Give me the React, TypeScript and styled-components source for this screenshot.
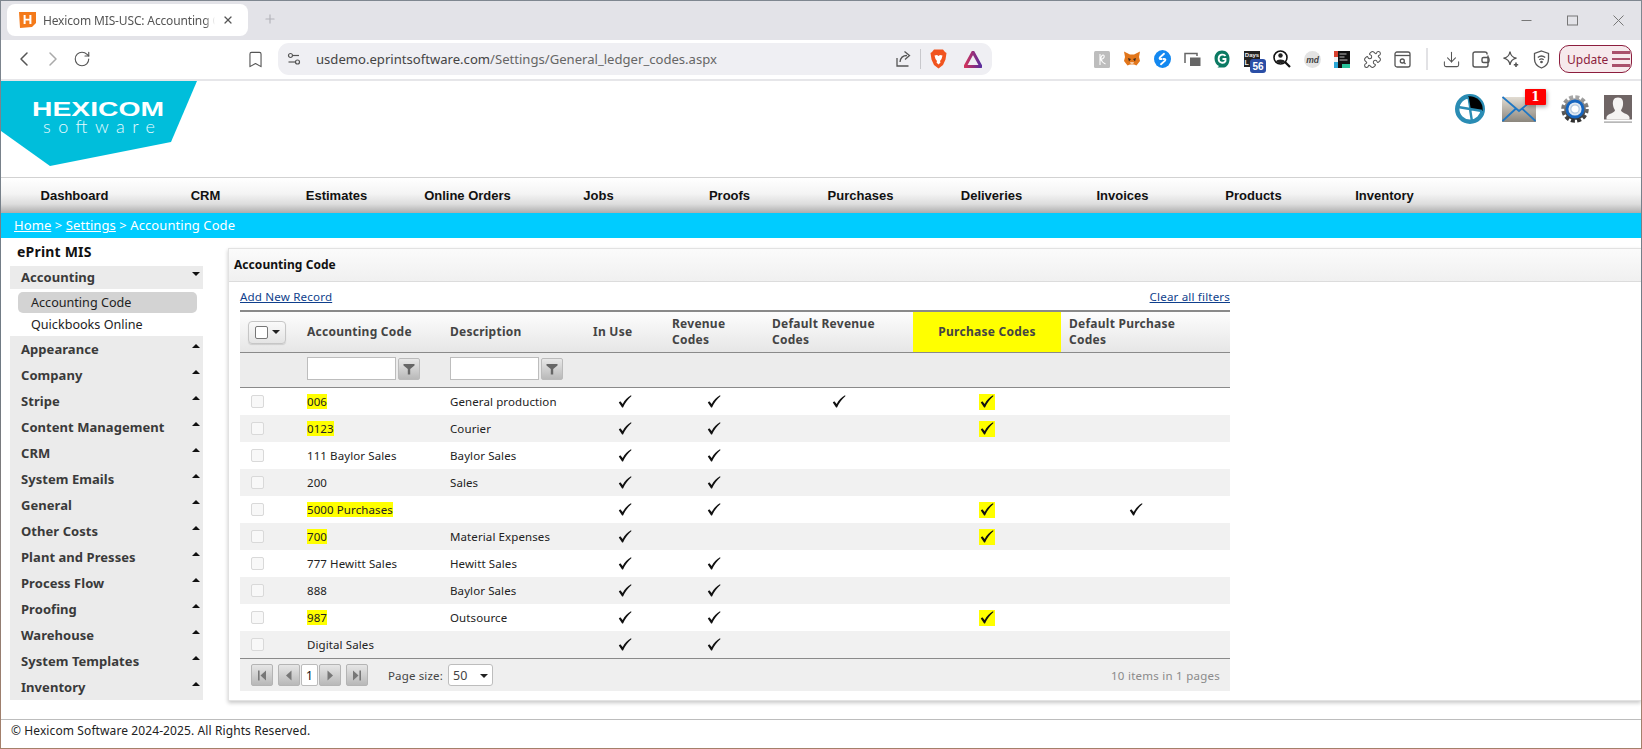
import React from "react";
import styled, { createGlobalStyle } from "styled-components";
import { ChevronLeft, ChevronRight, RotateCw, Bookmark, Puzzle, Download, X, Plus } from "lucide-react";

const UI = `"Noto Sans", "Open Sans", sans-serif`;
const CHROME = `"Noto Sans", "Open Sans", sans-serif`;

const Global = createGlobalStyle`
  html, body { margin: 0; padding: 0; background: #fff; overflow: hidden; }
  * { box-sizing: border-box; }
`;

const Frame = styled.div`
  width: 1642px; height: 749px; display: flex; flex-direction: column; overflow: hidden;
  border: 1px solid; border-image: linear-gradient(#7f8790, #6f7a84 50%, #a5806a) 1;
  font-family: ${UI}; background: #fff; color: #222;
`;

const TabStrip = styled.div`
  height: 39px; flex: none; background: #e3e3e8; display: flex; align-items: flex-start; padding: 3px 0 0 6px;
`;
const Tab = styled.div`
  width: 241px; height: 32px; background: #fff; border-radius: 8px; display: flex; align-items: center; padding-left: 12px;
  font: 12px ${CHROME}; color: #555; letter-spacing: -0.15px;
`;
const TabTitle = styled.span`
  width: 172px; margin-left: 7px; white-space: nowrap;
  -webkit-mask-image: linear-gradient(90deg, #000 94%, transparent);
  mask-image: linear-gradient(90deg, #000 94%, transparent);
`;
const TabClose = styled.span`
  display: flex; margin-left: 7px; color: #555;
`;
const NewTab = styled.span`
  display: flex; margin: 8px 0 0 15px; color: #b4b4ba;
`;
const WindowControls = styled.div`
  margin-left: auto; display: flex; align-items: center; height: 33px; padding-right: 17px; gap: 35px;
`;

const Toolbar = styled.div`
  height: 41px; flex: none; background: #fff; border-bottom: 2px solid #e6e6e9; display: flex; align-items: center; padding: 0 0 1px 8px;
`;
const Slot = styled.span<{ $w?: number; $color?: string }>`
  width: ${(p) => p.$w ?? 30}px; height: 28px; flex: none; display: flex; align-items: center; justify-content: center; position: relative;
  color: ${(p) => p.$color ?? "#555"};
`;
const NavSlots = styled.div`
  display: flex; width: 232px;
`;
const Omnibox = styled.div`
  width: 714px; height: 32px; margin-left: 9px; background: #efeff3; border-radius: 11px; display: flex; align-items: center; padding-left: 8px;
  font: 13.1px ${CHROME}; color: #444;
`;
const UrlText = styled.span`
  margin-left: 14px; white-space: nowrap;
  & > b { font-weight: 400; color: #666; }
`;
const OmniEnd = styled.div`
  margin-left: auto; display: flex; align-items: center; padding-right: 2px;
`;
const Divider = styled.span`
  width: 1px; height: 20px; background: #c8c8cc; margin-left: 8px;
`;
const Extensions = styled.div`
  display: flex; margin-left: 95px;
`;
const ToolSep = styled.span`
  width: 2px; height: 22px; background: #e2e2e5; margin: 0 8px 0 9px; flex: none;
`;
const UpdateButton = styled.div`
  width: 73px; height: 28px; margin-left: 3px; flex: none; border: 1.5px solid #8c1d3d; border-radius: 10px; background: #f6e9ec; color: #8c1d3d;
  font: 12px ${CHROME}; display: flex; align-items: center; padding-left: 7px; gap: 4px;
`;
const Burger = styled.span`
  display: flex; flex-direction: column; gap: 4px; width: 18px;
  & > i { display: block; height: 2.5px; background: #a9506b; }
`;
const DayBadge = styled.span`
  position: absolute; right: 1px; bottom: 0; width: 16px; height: 14px; background: #2a4ea6; color: #fff; border-radius: 3px;
  font: bold 10px "Liberation Sans", sans-serif; display: flex; align-items: center; justify-content: center;
`;

const Header = styled.div`
  height: 96px; flex: none; display: flex; justify-content: space-between; align-items: flex-start; background: #fff;
`;
const HeaderIcons = styled.div`
  display: flex; align-items: center; height: 30px; margin: 13px 9px 0 0;
`;
const IconBox = styled.span<{ $ml?: number }>`
  display: flex; position: relative; margin-left: ${(p) => p.$ml ?? 0}px;
`;
const MailBadge = styled.span`
  position: absolute; left: 23px; top: -7px; width: 21px; height: 16px; background: #f00; color: #fff; border-radius: 1px;
  font: bold 12px "DejaVu Serif", serif; display: flex; align-items: center; justify-content: center; box-shadow: 1px 2px 4px rgba(0,0,0,.35);
`;

const NavBar = styled.nav`
  height: 36px; flex: none; display: flex; padding-left: 8px; align-items: center; border-top: 1px solid #d2d2d2;
  background: linear-gradient(#fff 0%, #f4f4f4 45%, #dcdcdc 75%, #adadad 100%);
`;
const NavItem = styled.a`
  width: 131px; flex: none; text-align: center; font: bold 13px "Liberation Sans", sans-serif; color: #111;
`;

const Crumbs = styled.div`
  height: 25px; flex: none; background: #00ccff; color: #fff; padding: 0 0 1px 13px; display: flex; align-items: center; font-size: 13px; letter-spacing: 0.08px;
  white-space: pre;
  & > u { text-decoration: underline; }
`;

const Body = styled.div`
  flex: 1; display: flex; min-height: 0;
`;
const Sidebar = styled.aside`
  width: 227px; flex: none; padding: 4px 25px 0 9px;
`;
const SideTitle = styled.div`
  height: 24px; padding-left: 7px; font: bold 14px/20px ${UI}; letter-spacing: 0.2px; color: #111;
`;
const SideRow = styled.div<{ $h: number }>`
  height: ${(p) => p.$h}px; background: #ebebeb; display: flex; justify-content: space-between; align-items: center; padding: 0 3px 1px 11px;
  font: bold 13px ${UI}; letter-spacing: 0.05px; color: #3a3a3a;
`;
const Caret = styled.span<{ $down?: boolean }>`
  width: 0; height: 0; margin-top: -6px; border-left: 4px solid transparent; border-right: 4px solid transparent;
  ${(p) => (p.$down ? "border-top: 4px solid #111;" : "border-bottom: 4px solid #111;")}
`;
const SubList = styled.div`
  height: 47px; padding: 3px 6px 0 8px;
`;
const SubItem = styled.div<{ $active?: boolean }>`
  height: 21px; border-radius: 5px; padding-left: 13px; display: flex; align-items: center; font-size: 12.6px; color: #222;
  background: ${(p) => (p.$active ? "#d3d3d3" : "transparent")};
  margin-bottom: 0.5px;
`;

const Content = styled.main`
  flex: 1; min-width: 0; padding-top: 10px;
`;
const Panel = styled.section`
  height: 453px; border: 1px solid #e2e2e2; border-right: none; box-shadow: 0 2px 4px rgba(0,0,0,.22); background: #fff;
`;
const PanelHead = styled.h2`
  margin: 0; height: 33px; padding: 0 0 2px 5px; display: flex; align-items: center; font: bold 12px ${UI}; letter-spacing: 0.05px; color: #111;
  background: linear-gradient(#fbfbfb, #f0f0f0); border-bottom: 1px solid #dcdcdc;
`;
const PanelBody = styled.div`
  padding-left: 11px; width: 1001px;
`;
const LinkRow = styled.div`
  height: 28px; display: flex; justify-content: space-between; align-items: center;
`;
const BlueLink = styled.a`
  color: #0f3f8c; text-decoration: underline; font-size: 11.6px; letter-spacing: 0.16px;
`;

const Table = styled.table`
  width: 990px; table-layout: fixed; border-collapse: separate; border-spacing: 0; border-top: 2px solid #8a8a8a; font-size: 11.5px; letter-spacing: 0.1px;
`;
const HeadCell = styled.th<{ $hl?: boolean }>`
  height: 41px; padding: 0 8px; text-align: ${(p) => (p.$hl ? "center" : "left")}; font-size: 12px; letter-spacing: 0.25px; font-weight: 700; line-height: 16px; color: #444;
  border-bottom: 1px solid #8a8a8a;
  background: ${(p) => (p.$hl ? "#ffff00" : "linear-gradient(#fdfdfd, #e6e6e6)")};
`;
const FilterCell = styled.th`
  height: 35px; padding: 0 0 0 8px; background: #ececec; border-bottom: 1px solid #8a8a8a; text-align: left;
`;
const FilterWrap = styled.div`
  display: flex; align-items: center; gap: 2px; margin-top: -3px;
`;
const FilterInput = styled.input`
  width: 89px; height: 23px; border: 1px solid #bdbdbd; background: #fff; padding: 0; border-radius: 0;
`;
const FilterBtn = styled.span`
  width: 22px; height: 22px; border: 1px solid #bbb; border-radius: 2px; background: linear-gradient(#e8e8e8, #b9b9b9); display: flex; align-items: center; justify-content: center;
`;
const SelectAll = styled.div`
  width: 38px; height: 23px; border: 1px solid #c6c6c6; border-radius: 4px; background: linear-gradient(#fafafa, #e4e4e4);
  display: flex; align-items: center; padding-left: 6px; gap: 4px;
  box-shadow: 0 1px 1px rgba(0,0,0,.12);
`;
const SelectBox = styled.span`
  width: 13px; height: 13px; background: #fff; border: 1px solid #777; border-radius: 2px;
`;
const SmallCaret = styled.span`
  width: 0; height: 0; border-left: 4px solid transparent; border-right: 4px solid transparent; border-top: 4px solid #222;
`;
const Row = styled.tr<{ $alt: boolean }>`
  background: ${(p) => (p.$alt ? "#f1f1f1" : "#fff")};
`;
const Cell = styled.td`
  height: 27px; padding: 0 8px 1px; color: #222; white-space: nowrap;
`;
const CheckCell = styled.td`
  height: 27px; padding: 0; text-align: center; line-height: 0;
  &:last-child { padding-right: 20px; }
`;
const RowBox = styled.span`
  display: block; width: 13px; height: 13px; margin-left: 11px; background: #f8f8f8; border: 1px solid #d9d9d9; border-radius: 2px;
`;
const Mark = styled.mark`
  background: #ffff00; color: inherit; padding: 0;
`;
const CheckBox = styled.span<{ $hl?: boolean }>`
  display: inline-flex; width: 16px; height: 16px; align-items: center; justify-content: center; background: ${(p) => (p.$hl ? "#ffff00" : "transparent")};
`;

const Pager = styled.div`
  width: 990px; height: 33px; background: #efefef; border-top: 1px solid #8a8a8a; display: flex; align-items: center; padding: 0 10px 0 11px; font-size: 11.5px;
`;
const PageBtn = styled.span<{ $ml?: number }>`
  width: 22px; height: 22px; margin-left: ${(p) => p.$ml ?? 0}px; border: 1px solid #b4b4b4; border-radius: 2px; background: linear-gradient(#e6e6e6, #b8b8b8); display: flex; align-items: center; justify-content: center;
`;
const PageNum = styled.span`
  width: 17px; height: 22px; margin: 0 1px; background: #fff; border: 1px solid #bbb; border-radius: 2px; display: flex; align-items: center; justify-content: center; color: #111; font-size: 12px;
`;
const PageLabel = styled.span`
  margin-left: 20px; color: #444; width: 60px; letter-spacing: 0.15px; white-space: nowrap;
`;
const PageSelect = styled.span`
  width: 45px; height: 22px; background: #fff; border: 1px solid #bdbdbd; border-radius: 3px; display: flex; align-items: center; justify-content: space-between; padding: 1px 4px 0 4px; font-size: 12.5px; color: #444;
`;
const PageInfo = styled.span`
  margin-left: auto; color: #8a8a8a; letter-spacing: 0.25px;
`;

const Footer = styled.footer`
  height: 29px; flex: none; border-top: 1px solid #bdbdbd; padding: 0 0 7px 10px; display: flex; align-items: center; font-size: 12px; letter-spacing: 0.1px; color: #222;
`;

const Check = () => (
  <svg width="14" height="13" viewBox="0 0 14 13">
    <path d="M0.8 7.4 L2.3 6.2 L4.7 9 C6.5 5.4 9.5 2.2 13 0.3 L13.5 0.9 C10 3.9 7 8 5 12.6 L4.1 12.6 Z" fill="#111" />
  </svg>
);
const Funnel = () => (
  <svg width="12" height="12" viewBox="0 0 12 12"><path d="M0.5 1H11.5V2.5L7.2 6V11.5H4.8V6L0.5 2.5Z" fill="#666" /></svg>
);
const PagerIcon = ({ kind }: { kind: "first" | "prev" | "next" | "last" }) => {
  const c = "#777";
  return (
    <svg width="10" height="11" viewBox="0 0 10 11">
      {kind === "first" && <><rect x="1" y="0.5" width="1.6" height="10" fill={c} /><path d="M9 0.5V10.5L3.5 5.5Z" fill={c} /></>}
      {kind === "prev" && <path d="M7.5 0.5V10.5L2 5.5Z" fill={c} />}
      {kind === "next" && <path d="M2.5 0.5V10.5L8 5.5Z" fill={c} />}
      {kind === "last" && <><rect x="7.4" y="0.5" width="1.6" height="10" fill={c} /><path d="M1 0.5V10.5L6.5 5.5Z" fill={c} /></>}
    </svg>
  );
};

const WinMin = () => (
  <svg width="11" height="11" viewBox="0 0 11 11"><path d="M0.5 5.5H10.5" stroke="#777" strokeWidth="1" /></svg>
);
const WinMax = () => (
  <svg width="11" height="11" viewBox="0 0 11 11"><rect x="0.5" y="1" width="10" height="9" fill="none" stroke="#777" strokeWidth="1" /></svg>
);
const WinClose = () => (
  <svg width="11" height="11" viewBox="0 0 11 11"><path d="M0.5 0.5L10.5 10.5M10.5 0.5L0.5 10.5" stroke="#777" strokeWidth="1" /></svg>
);

const Logo = () => (
  <svg width="198" height="86" viewBox="0 0 198 86">
    <polygon points="0,0 196,0 170,61 49,85 0,50" fill="#00bedb" />
    <text x="31" y="35" fontFamily="Liberation Sans, sans-serif" fontWeight="700" fontSize="21" fill="#fff" textLength="132" lengthAdjust="spacingAndGlyphs">HEXICOM</text>
    <text x="42" y="52" fontFamily="Lato, sans-serif" fontWeight="300" fontSize="18" fill="#e8fbff" textLength="112">software</text>
  </svg>
);
const PieIcon = () => (
  <svg width="30" height="30" viewBox="0 0 30 30">
    <circle cx="15" cy="15" r="12.8" fill="#fff" stroke="#2a8cb4" strokeWidth="4.4" />
    <path d="M15 15 L13 2.5 A12.6 12.6 0 0 1 27.5 17 Z" fill="#000" />
    <path d="M15 15 L27 17 M15 15 L17 27.5 M15 15 L3 13" stroke="#2a8cb4" strokeWidth="2.4" />
    <path d="M15 15 L13 3" stroke="#2a8cb4" strokeWidth="1.5" />
  </svg>
);
const MailIcon = () => (
  <svg width="34" height="26" viewBox="0 0 34 26">
    <defs><linearGradient id="mg" x1="0" y1="0" x2="0" y2="1"><stop offset="0" stopColor="#e2dcd2" /><stop offset="1" stopColor="#8b867d" /></linearGradient></defs>
    <rect x="0" y="1" width="34" height="25" fill="url(#mg)" />
    <path d="M0.5 1 L17 15 L33 2 M0.5 25 L14 12.5 M33.5 25 L20 12.5" stroke="#1f77c4" strokeWidth="1.8" fill="none" />
  </svg>
);
const GearIcon = () => (
  <svg width="28" height="28" viewBox="0 0 28 28">
    <defs><linearGradient id="gg" x1="0" y1="0" x2="0" y2="1"><stop offset="0" stopColor="#a8a8a8" /><stop offset="1" stopColor="#2e2e2e" /></linearGradient></defs>
    <circle cx="14" cy="14" r="12" fill="none" stroke="url(#gg)" strokeWidth="3.6" strokeDasharray="4 2.28" />
    <circle cx="14" cy="14" r="10.8" fill="url(#gg)" />
    <circle cx="14" cy="14" r="8" fill="#dfe8f2" stroke="#1565c0" strokeWidth="2.8" />
    <circle cx="14" cy="14" r="4.2" fill="#fff" stroke="#b4c7dc" strokeWidth="1.2" />
  </svg>
);
const UserIcon = () => (
  <svg width="28" height="28" viewBox="0 0 28 28">
    <rect width="28" height="28" fill="#fff" />
    <rect width="28" height="24.5" fill="#6f6565" />
    <path d="M14 2.5 C9.5 2.5 8.5 6 9 10 C9.3 12.5 10.5 14 11 15.5 C10.5 18 4 18.5 2.5 22 L2.5 24.5 H25.5 V22 C24 18.5 17.5 18 17 15.5 C17.5 14 18.7 12.5 19 10 C19.5 6 18.5 2.5 14 2.5 Z" fill="#f5f3f2" />
    <rect y="26.5" width="28" height="1.2" fill="#9a9a9a" />
  </svg>
);

const Favicon = () => (
  <svg width="17" height="16" viewBox="0 0 17 16">
    <path d="M0 0H17V11L13 15L1 16Z" fill="#f47a1a" />
    <path d="M4.6 3H6.6V6.8H10.4V3H12.4V12H10.4V8.6H6.6V12H4.6Z" fill="#fff" />
  </svg>
);
const Tune = () => (
  <svg width="16" height="16" viewBox="0 0 16 16" fill="none" stroke="#555" strokeWidth="1.2">
    <circle cx="4.5" cy="4.5" r="2" /><path d="M7 4.5H13" /><circle cx="11.5" cy="11" r="2" /><path d="M9 11H2.5" />
  </svg>
);
const ShareIcon = () => (
  <svg width="18" height="18" viewBox="0 0 18 18" fill="none" stroke="#555" strokeWidth="1.3">
    <path d="M3 8V16H14.5" /><path d="M6 12 C6.5 7.5 9 5.5 13 5.5" /><path d="M10.5 1.5 L15.5 5.5 L11 9.5" />
  </svg>
);
const Brave = () => (
  <svg width="17" height="20" viewBox="0 0 17 20">
    <path d="M4 0.5H13L15 3L16.5 4L15.5 10.5L13 16L8.5 19.5L4 16L1.5 10.5L0.5 4L2 3Z" fill="#f1541f" />
    <path d="M4.5 6.5L7 6L8.5 7L10 6L12.5 6.5L11.5 10L10 12L10.5 13.5L8.5 15.5L6.5 13.5L7 12L5.5 10Z" fill="#fff" />
  </svg>
);
const Aurora = () => (
  <svg width="18" height="17" viewBox="0 0 18 17">
    <path d="M9 1 L17 15.5 H1 Z" fill="none" stroke="url(#au)" strokeWidth="3" strokeLinejoin="round" />
    <defs><linearGradient id="au" x1="0" y1="0" x2="1" y2="0"><stop offset="0" stopColor="#d1335b" /><stop offset="1" stopColor="#5a2d9c" /></linearGradient></defs>
  </svg>
);
const ExtK = () => (
  <svg width="16" height="17" viewBox="0 0 16 17"><rect width="16" height="17" rx="1.5" fill="#bdbdbd" /><path d="M6 3V14M6 9C9 8 11 6.5 10 4.5C9 3 6.5 5 7 8C7.4 10.5 9.5 12 11.5 13" stroke="#fff" strokeWidth="1.1" fill="none" /></svg>
);
const ExtFox = () => (
  <svg width="18" height="16" viewBox="0 0 18 16">
    <path d="M1 0.5L7 3.5H11L17 0.5L16 6L17 10L13.5 14.5L11 13.5H7L4.5 14.5L1 10L2 6Z" fill="#e2761b" />
    <path d="M5 7L8 8L6 10.5ZM13 7L10 8L12 10.5Z" fill="#3a2a20" /><path d="M7 11H11L10 13.5H8Z" fill="#f6c9a4" />
  </svg>
);
const ExtShazam = () => (
  <svg width="17" height="18" viewBox="0 0 17 18">
    <ellipse cx="8.5" cy="9" rx="8.5" ry="9" fill="#1388f0" />
    <path d="M10 3.8L6 7.3C5 8.5 6 9.5 7.5 9M7 14.2L11 10.7C12 9.5 11 8.5 9.5 9" fill="none" stroke="#fff" strokeWidth="1.9" strokeLinecap="round" />
  </svg>
);
const ExtWindows = () => (
  <svg width="17" height="15" viewBox="0 0 17 15"><path d="M1 11V1.5H13V4" fill="none" stroke="#666" strokeWidth="1.5" /><rect x="6" y="5.5" width="10.5" height="8.5" fill="#666" /></svg>
);
const ExtG = () => (
  <svg width="16" height="18" viewBox="0 0 16 18">
    <path d="M8 0.5C3.5 0.5 0.5 4 0.5 8.5C0.5 12 2.5 15 5 16L3.5 17.5H10C13.5 17 15.5 13 15.5 8.5C15.5 4 12.5 0.5 8 0.5Z" fill="#0b7a63" />
    <path d="M11.5 6C10 3.8 5 4 4.6 8.5C4.4 13 10 14 11.5 11V9H8.5" fill="none" stroke="#fff" strokeWidth="1.8" />
  </svg>
);
const ExtDays = () => (
  <svg width="30" height="28" viewBox="0 0 30 28">
    <rect x="7" y="6" width="16" height="16" fill="#222" />
    <text x="15" y="12" textAnchor="middle" fontFamily="Liberation Sans, sans-serif" fontSize="6" fontWeight="700" fill="#eee">Days</text>
    <text x="7.5" y="20" fontFamily="Liberation Sans, sans-serif" fontSize="7" fontWeight="700" fill="#eee">L</text>
  </svg>
);
const ExtSearchPerson = () => (
  <svg width="18" height="18" viewBox="0 0 18 18">
    <circle cx="7.5" cy="7.5" r="6.5" fill="#fff" stroke="#111" strokeWidth="1.6" />
    <circle cx="7.5" cy="5.5" r="2.2" fill="#222" /><path d="M3 11.5C3.5 8.8 11.5 8.8 12 11.5L9.5 13H5.5Z" fill="#222" />
    <path d="M12 12L17 17" stroke="#111" strokeWidth="2.2" />
  </svg>
);
const ExtMd = () => (
  <svg width="17" height="17" viewBox="0 0 17 17"><circle cx="8.5" cy="8.5" r="8.5" fill="#e3e3e3" /><text x="8.5" y="11.5" textAnchor="middle" fontFamily="Liberation Sans, sans-serif" fontSize="8.5" fontWeight="700" fontStyle="italic" fill="#444">md</text></svg>
);
const ExtLabel = () => (
  <svg width="16" height="17" viewBox="0 0 16 17">
    <rect width="16" height="17" fill="#111" /><rect width="4" height="6" fill="#d8412f" /><rect y="6" width="4" height="5" fill="#f0f0f0" /><rect y="11" width="4" height="6" fill="#2ba7d6" /><rect x="8" y="13" width="8" height="4" fill="#28c39a" />
    <rect x="5.5" y="2.5" width="7" height="1" fill="#bbb" /><rect x="5.5" y="5.5" width="5" height="1" fill="#bbb" /><rect x="5.5" y="8.5" width="8" height="1" fill="#bbb" />
  </svg>
);
const ExtSidePanel = () => (
  <svg width="17" height="17" viewBox="0 0 17 17" fill="none" stroke="#555" strokeWidth="1.3">
    <rect x="1" y="1" width="15" height="15" rx="2" /><path d="M1 4.5H16" /><circle cx="8.3" cy="10" r="2" /><path d="M10 11.5L11.5 13" />
  </svg>
);
const Wallet = () => (
  <svg width="18" height="17" viewBox="0 0 18 17" fill="none" stroke="#555" strokeWidth="1.4">
    <path d="M15 3.5V2.5C15 1.5 14 1 13 1H3C1.8 1 1 1.8 1 3V14C1 15.2 1.8 16 3 16H14C15.2 16 16 15.2 16 14V4.5" /><rect x="10" y="6.5" width="7" height="5" rx="1.5" />
  </svg>
);
const Sparkle = () => (
  <svg width="18" height="18" viewBox="0 0 18 18" fill="none" stroke="#555" strokeWidth="1.3">
    <path d="M8 1.5C8.5 5.5 10.5 7.5 14.5 8.2C10.5 9 8.5 11 8 15C7.5 11 5.5 9 1.5 8.2C5.5 7.5 7.5 5.5 8 1.5Z" />
    <path d="M14 12.5V17M11.8 14.8H16.2" strokeWidth="1.6" />
  </svg>
);
const ShieldWifi = () => (
  <svg width="17" height="19" viewBox="0 0 17 19" fill="none" stroke="#555" strokeWidth="1.3">
    <path d="M8.5 1L15.5 3.5V9C15.5 13.5 12.5 16.5 8.5 18C4.5 16.5 1.5 13.5 1.5 9V3.5Z" />
    <path d="M4.8 7.5C7 5.7 10 5.7 12.2 7.5M6.3 9.7C7.6 8.7 9.4 8.7 10.7 9.7" /><circle cx="8.5" cy="12" r="0.7" fill="#555" />
  </svg>
);

const navItems = ["Dashboard", "CRM", "Estimates", "Online Orders", "Jobs", "Proofs", "Purchases", "Deliveries", "Invoices", "Products", "Inventory"];
const groups = ["Appearance", "Company", "Stripe", "Content Management", "CRM", "System Emails", "General", "Other Costs", "Plant and Presses", "Process Flow", "Proofing", "Warehouse", "System Templates", "Inventory"];

type R = { code: string; desc: string; hl?: boolean; use?: boolean; rev?: boolean; drev?: boolean; pur?: boolean; dpur?: boolean };
const rows: R[] = [
  { code: "006", desc: "General production", hl: true, use: true, rev: true, drev: true, pur: true },
  { code: "0123", desc: "Courier", hl: true, use: true, rev: true, pur: true },
  { code: "111 Baylor Sales", desc: "Baylor Sales", use: true, rev: true },
  { code: "200", desc: "Sales", use: true, rev: true },
  { code: "5000 Purchases", desc: "", hl: true, use: true, rev: true, pur: true, dpur: true },
  { code: "700", desc: "Material Expenses", hl: true, use: true, pur: true },
  { code: "777 Hewitt Sales", desc: "Hewitt Sales", use: true, rev: true },
  { code: "888", desc: "Baylor Sales", use: true, rev: true },
  { code: "987", desc: "Outsource", hl: true, use: true, rev: true, pur: true },
  { code: "Digital Sales", desc: "", use: true, rev: true },
];

const Tick = ({ on, hl }: { on?: boolean; hl?: boolean }) => (
  <CheckCell>{on && <CheckBox $hl={hl}><Check /></CheckBox>}</CheckCell>
);

export default function App() {
  return (
    <Frame>
      <Global />
      <TabStrip>
        <Tab>
          <Favicon />
          <TabTitle>Hexicom MIS-USC: Accounting C</TabTitle>
          <TabClose><X size={12} strokeWidth={2.4} /></TabClose>
        </Tab>
        <NewTab><Plus size={14} strokeWidth={2} /></NewTab>
        <WindowControls>
          <WinMin />
          <WinMax />
          <WinClose />
        </WindowControls>
      </TabStrip>
      <Toolbar>
        <NavSlots>
          <Slot $w={29}><ChevronLeft size={24} strokeWidth={1.5} /></Slot>
          <Slot $w={29} $color="#aaa"><ChevronRight size={24} strokeWidth={1.5} /></Slot>
          <Slot $w={29}><RotateCw size={18} strokeWidth={1.5} /></Slot>
          <Slot $w={145} />
        </NavSlots>
        <Slot $w={28}><Bookmark size={19} strokeWidth={1.4} /></Slot>
        <Omnibox>
          <Tune />
          <UrlText>usdemo.eprintsoftware.com<b>/Settings/General_ledger_codes.aspx</b></UrlText>
          <OmniEnd>
            <ShareIcon />
            <Divider />
            <Slot $w={34}><Brave /></Slot>
            <Slot $w={35}><Aurora /></Slot>
          </OmniEnd>
        </Omnibox>
        <Extensions>
          <Slot><ExtK /></Slot>
          <Slot><ExtFox /></Slot>
          <Slot><ExtShazam /></Slot>
          <Slot><ExtWindows /></Slot>
          <Slot><ExtG /></Slot>
          <Slot><ExtDays /><DayBadge>56</DayBadge></Slot>
          <Slot><ExtSearchPerson /></Slot>
          <Slot><ExtMd /></Slot>
          <Slot><ExtLabel /></Slot>
          <Slot><Puzzle size={19} strokeWidth={1.3} /></Slot>
          <Slot><ExtSidePanel /></Slot>
        </Extensions>
        <ToolSep />
        <Slot><Download size={19} strokeWidth={1.3} /></Slot>
        <Slot><Wallet /></Slot>
        <Slot><Sparkle /></Slot>
        <Slot><ShieldWifi /></Slot>
        <UpdateButton>Update<Burger><i /><i /><i /></Burger></UpdateButton>
      </Toolbar>
      <Header>
        <Logo />
        <HeaderIcons>
          <IconBox><PieIcon /></IconBox>
          <IconBox $ml={17}><MailIcon /><MailBadge>1</MailBadge></IconBox>
          <IconBox $ml={25}><GearIcon /></IconBox>
          <IconBox $ml={15}><UserIcon /></IconBox>
        </HeaderIcons>
      </Header>
      <NavBar>
        {navItems.map((n) => <NavItem key={n}>{n}</NavItem>)}
      </NavBar>
      <Crumbs><u>Home</u>{" > "}<u>Settings</u>{" > Accounting Code"}</Crumbs>
      <Body>
        <Sidebar>
          <SideTitle>ePrint MIS</SideTitle>
          <SideRow $h={23}>Accounting<Caret $down /></SideRow>
          <SubList>
            <SubItem $active>Accounting Code</SubItem>
            <SubItem>Quickbooks Online</SubItem>
          </SubList>
          {groups.map((g) => <SideRow key={g} $h={26}>{g}<Caret /></SideRow>)}
        </Sidebar>
        <Content>
          <Panel>
            <PanelHead>Accounting Code</PanelHead>
            <PanelBody>
              <LinkRow>
                <BlueLink>Add New Record</BlueLink>
                <BlueLink>Clear all filters</BlueLink>
              </LinkRow>
              <Table>
                <colgroup>
                  {[59, 143, 143, 79, 100, 149, 148, 169].map((w, i) => <col key={i} style={{ width: w }} />)}
                </colgroup>
                <thead>
                  <tr>
                    <HeadCell><SelectAll><SelectBox /><SmallCaret /></SelectAll></HeadCell>
                    <HeadCell>Accounting Code</HeadCell>
                    <HeadCell>Description</HeadCell>
                    <HeadCell>In Use</HeadCell>
                    <HeadCell>Revenue<br />Codes</HeadCell>
                    <HeadCell>Default Revenue<br />Codes</HeadCell>
                    <HeadCell $hl>Purchase Codes</HeadCell>
                    <HeadCell>Default Purchase<br />Codes</HeadCell>
                  </tr>
                  <tr>
                    <FilterCell />
                    <FilterCell><FilterWrap><FilterInput /><FilterBtn><Funnel /></FilterBtn></FilterWrap></FilterCell>
                    <FilterCell><FilterWrap><FilterInput /><FilterBtn><Funnel /></FilterBtn></FilterWrap></FilterCell>
                    <FilterCell /><FilterCell /><FilterCell /><FilterCell /><FilterCell />
                  </tr>
                </thead>
                <tbody>
                  {rows.map((r, i) => (
                    <Row key={r.code} $alt={i % 2 === 1}>
                      <CheckCell><RowBox /></CheckCell>
                      <Cell>{r.hl ? <Mark>{r.code}</Mark> : r.code}</Cell>
                      <Cell>{r.desc}</Cell>
                      <Tick on={r.use} />
                      <Tick on={r.rev} />
                      <Tick on={r.drev} />
                      <Tick on={r.pur} hl />
                      <Tick on={r.dpur} />
                    </Row>
                  ))}
                </tbody>
              </Table>
              <Pager>
                <PageBtn><PagerIcon kind="first" /></PageBtn>
                <PageBtn $ml={5}><PagerIcon kind="prev" /></PageBtn>
                <PageNum>1</PageNum>
                <PageBtn><PagerIcon kind="next" /></PageBtn>
                <PageBtn $ml={5}><PagerIcon kind="last" /></PageBtn>
                <PageLabel>Page size:</PageLabel>
                <PageSelect>50<SmallCaret /></PageSelect>
                <PageInfo>10 items in 1 pages</PageInfo>
              </Pager>
            </PanelBody>
          </Panel>
        </Content>
      </Body>
      <Footer>© Hexicom Software 2024-2025. All Rights Reserved.</Footer>
    </Frame>
  );
}
